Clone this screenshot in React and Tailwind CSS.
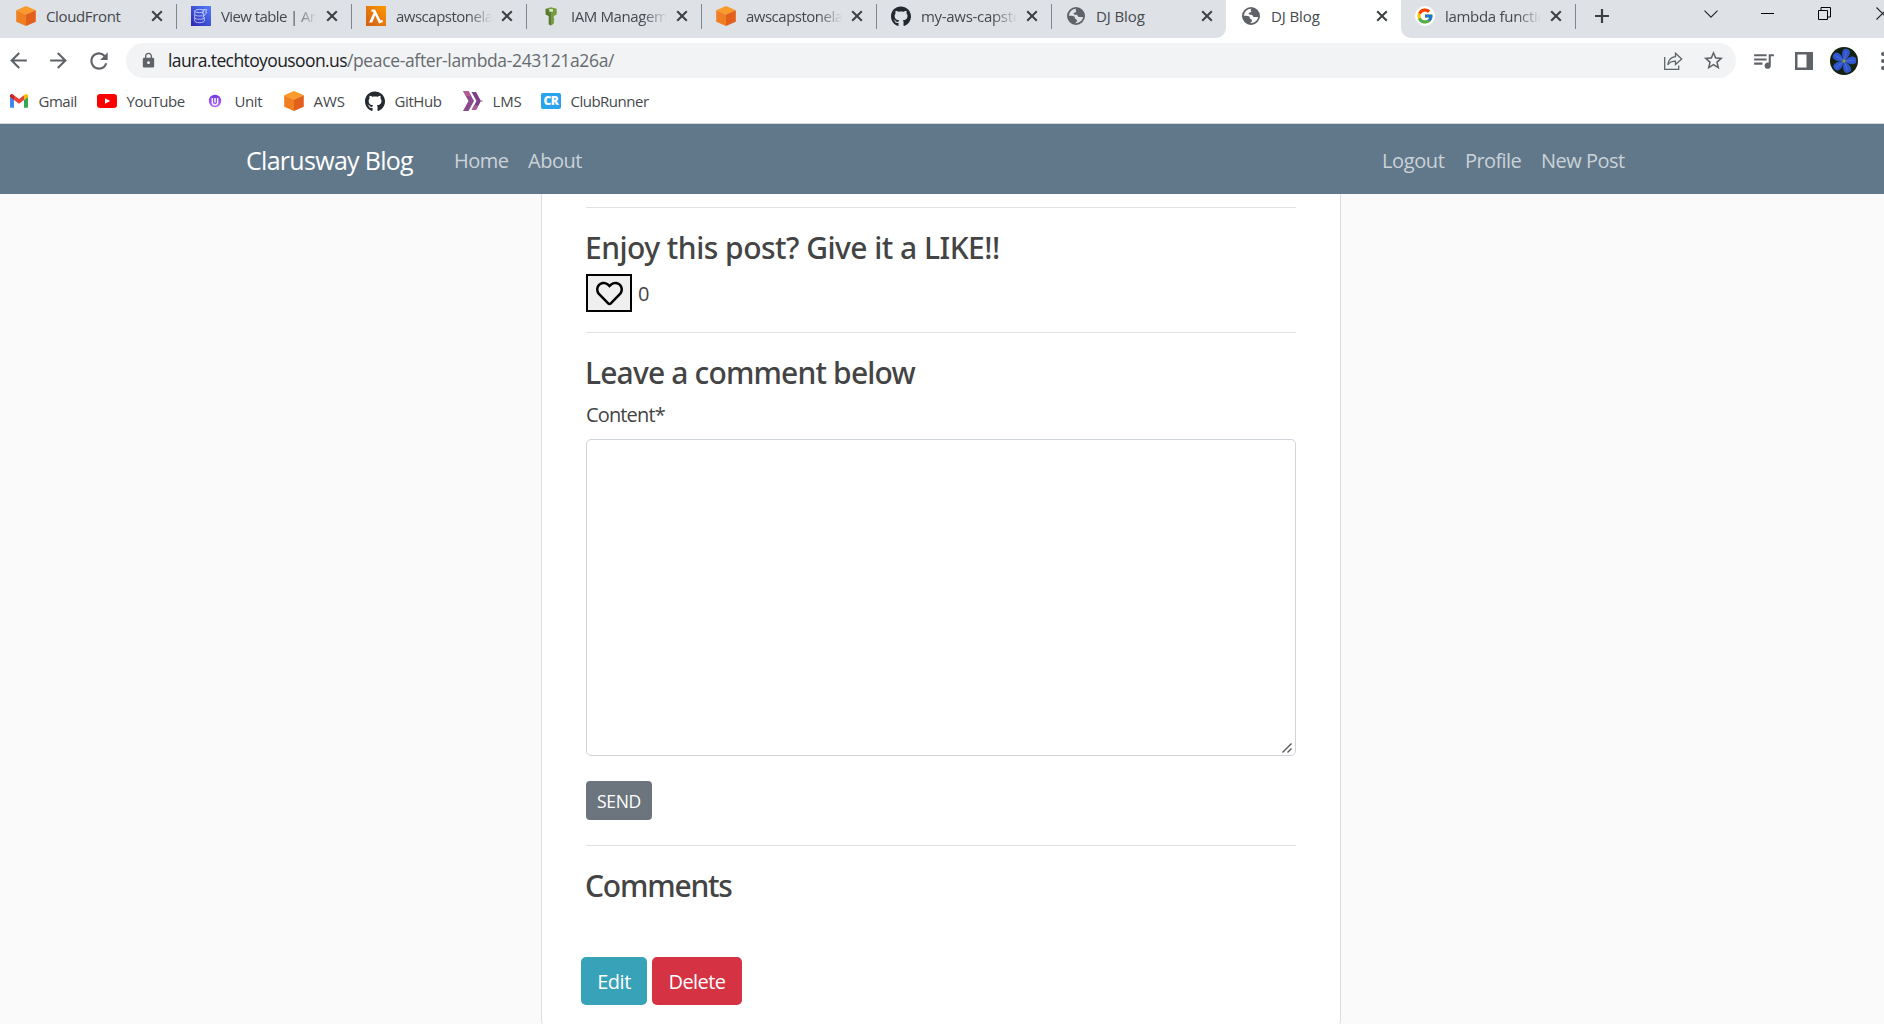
import React from "react";
import { FaGithub, FaRegHeart } from "react-icons/fa";
import { FcGoogle } from "react-icons/fc";
import { MdArrowBack, MdArrowForward, MdRefresh, MdLock, MdStarBorder, MdQueueMusic } from "react-icons/md";

const AwsCube = () => (
  <svg viewBox="0 0 20 20" className="h-5 w-5 shrink-0">
    <path d="M10 0 L19.8 4.2 L10 8.4 L0.2 4.2 Z" fill="#fa9a2a" />
    <path d="M0.2 4.2 L10 8.4 V20 L0.2 15.8 Z" fill="#f07f22" />
    <path d="M19.8 4.2 L10 8.4 V20 L19.8 15.8 Z" fill="#e2601c" />
  </svg>
);

const DynamoIcon = () => (
  <svg viewBox="0 0 20 20" className="h-5 w-5 shrink-0">
    <defs>
      <linearGradient id="dynamo" x1="0" y1="1" x2="1" y2="0">
        <stop offset="0" stopColor="#2e27ad" />
        <stop offset="1" stopColor="#527fff" />
      </linearGradient>
    </defs>
    <rect width="20" height="20" fill="url(#dynamo)" />
    <g fill="none" stroke="#cfd6ff" strokeWidth="0.8">
      <ellipse cx="8.5" cy="5" rx="4.8" ry="1.6" />
      <path d="M3.700 5v10c0 .9 2.100 1.700 4.800 1.700s4.800-.8 4.800-1.700v-4M3.700 8.400c0 .9 2.100 1.600 4.800 1.600 1 0 2-.1 2.800-.4M3.700 11.700c0 .9 2.100 1.600 4.800 1.600s4.800-.7 4.800-1.600" />
      <path d="M12.500 3.500h3.300l-1.300 2.700h1.500l-4 5 1-3.500h-1.500z" />
    </g>
  </svg>
);

const LambdaIcon = () => (
  <svg viewBox="0 0 20 20" className="h-5 w-5 shrink-0">
    <defs>
      <linearGradient id="lambda" x1="0" y1="1" x2="1" y2="0">
        <stop offset="0" stopColor="#d05c17" />
        <stop offset="1" stopColor="#f90" />
      </linearGradient>
    </defs>
    <rect width="20" height="20" fill="url(#lambda)" />
    <path d="M5.500 3.600h3.600l5.300 10.700 1.700-.6 1 2.400-4 1.300L9.200 9.200 6.300 16.600H3l4.600-9.900-.6-1H5.500z" fill="#fff" />
  </svg>
);

const IamIcon = () => (
  <svg viewBox="0 0 20 20" className="h-5 w-5 shrink-0">
    <path d="M10 1.200 15.700 2.800V8.500L12.800 10V12.500L13.400 13.500 12.600 15l.6 1.300L12.300 18 10 19.600 7.800 18.200V10L4.700 8.500V2.800Z" fill="#759c3e" />
    <path d="M4.700 2.800 10 4.500V19.600L7.800 18.200V10L4.700 8.500Z" fill="#5c7a31" />
    <path d="M8.300 3.100h3.600v2.600H8.300z" fill="#dfe8d0" />
  </svg>
);

const GlobeIcon = () => (
  <svg viewBox="0 0 20 20" className="h-5 w-5 shrink-0">
    <circle cx="10" cy="10" r="8.100" fill="none" stroke="#5f6368" strokeWidth="1.800" />
    <path d="M11 2C9.600 3 9.300 4.600 10.400 5.400 9.600 6.600 7.900 6.300 7.600 7.600 7.500 8.800 9 8.700 10.200 8.800 12 9 11.600 10.600 12.800 11 14.500 11.300 15.600 10.600 18 11.300 18.800 6 15.500 2 11 2ZM2 9.800C4 9.600 7.300 9.500 8.400 10.600 9.200 11.500 8.400 12.400 9.600 13 10.800 13.500 11.300 14 10.900 15.200 10.500 16.200 9 16.400 8.800 18 4.500 17.500 1.800 14 2 9.800Z" fill="#5f6368" />
  </svg>
);

const GithubMark = () => <FaGithub className="h-[21px] w-5 shrink-0 text-[#24292f]" />;

const GoogleMark = () => (
  <span className="flex h-5 w-5 shrink-0 items-center justify-center rounded-full bg-white">
    <FcGoogle className="h-[18px] w-[18px]" />
  </span>
);

const GmailIcon = () => (
  <svg viewBox="0 0 20 20" className="h-5 w-5 shrink-0">
    <path d="M1 6v9.700c0 .7.500 1.100 1.100 1.100H5V8.500z" fill="#4285f4" />
    <path d="M15 8.500v8.300h2.900c.6 0 1.100-.5 1.100-1.100V6z" fill="#34a853" />
    <path d="M15 4.200V9l4-3V4.800c0-1.500-1.700-2.300-2.900-1.400z" fill="#fbbc04" />
    <path d="M5 9V4.200l5 3.800 5-3.800V9l-5 3.800z" fill="#ea4335" />
    <path d="M1 4.800V6l4 3V4.200L3.900 3.400C2.700 2.500 1 3.300 1 4.800z" fill="#c5221f" />
  </svg>
);

const YoutubeIcon = () => (
  <svg viewBox="0 0 20 20" className="h-5 w-5 shrink-0">
    <rect x="0" y="3" width="20" height="14" rx="3.200" fill="#f00" />
    <path d="M8 7.200 13.200 10 8 12.800z" fill="#fff" />
  </svg>
);

const UnitIcon = () => (
  <svg viewBox="0 0 20 20" className="h-5 w-5 shrink-0">
    <defs>
      <linearGradient id="unit" x1="0" y1="0" x2="0" y2="1">
        <stop offset="0" stopColor="#6f35e8" />
        <stop offset="1" stopColor="#bd6bf5" />
      </linearGradient>
    </defs>
    <circle cx="10" cy="10" r="6.200" fill="url(#unit)" />
    <path d="M7.300 7v4.200a2.700 2.700 0 0 0 5.400 0V7M10 7v4.500" fill="none" stroke="#fff" strokeWidth="1.400" />
  </svg>
);

const LmsIcon = () => (
  <svg viewBox="0 0 20 20" className="h-5 w-5 shrink-0">
    <path d="M0 0h5.500l5.500 10-5.500 10H0l5.500-10z" fill="#8b4a8e" />
    <path d="M8.500 1H13l5 9-5 9H8.500l5-9z" fill="#7b3f86" />
    <path d="M0 0h5.500l2.700 5H2.800zM8.500 19H13l2.500-4.500H11z" fill="#c2669b" fillOpacity="0.700" />
    <circle cx="18.800" cy="10" r="1" fill="#c9a0cc" />
  </svg>
);

const ClubIcon = () => (
  <span className="flex h-4 w-5 shrink-0 items-center justify-center rounded-[2px] bg-[#2aa3ef] font-['Open_Sans'] text-[12px] leading-none font-extrabold tracking-[-0.5px] text-white">
    CR
  </span>
);

const CloseX = () => (
  <svg viewBox="0 0 12 12" className="h-3 w-3 shrink-0">
    <path d="M1.200 1.200 10.800 10.800M10.800 1.200 1.200 10.800" stroke="#3c4043" strokeWidth="2" />
  </svg>
);

function Tab({ icon: Icon, title, fade, sep, tracking = "tracking-[-0.6px]" }) {
  return (
    <div className="relative flex h-8 w-[175px] shrink-0 items-center pl-[15px]">
      <Icon />
      <span
        className={
          "ml-2.5 w-[96px] overflow-hidden pb-px text-[15px] leading-5 whitespace-nowrap text-[#45494d] " +
          tracking +
          (fade ? " [mask-image:linear-gradient(to_right,#000_75%,transparent_100%)]" : "")
        }
      >
        {title}
      </span>
      <span className="ml-[9px] flex">
        <CloseX />
      </span>
      {sep && <span className="absolute top-1 right-[-1px] h-[25px] w-px bg-[#80868b]" />}
    </div>
  );
}

const leftTabs = [
  { icon: AwsCube, title: "CloudFront", sep: true, tracking: "tracking-[-0.36px]" },
  { icon: DynamoIcon, title: "View table | Am", fade: true, sep: true },
  { icon: LambdaIcon, title: "awscapstonela", fade: true, sep: true, tracking: "tracking-[-0.5px]" },
  { icon: IamIcon, title: "IAM Managem", fade: true, sep: true, tracking: "tracking-[-0.4px]" },
  { icon: AwsCube, title: "awscapstonela", fade: true, sep: true, tracking: "tracking-[-0.5px]" },
  { icon: GithubMark, title: "my-aws-capsto", fade: true, sep: true, tracking: "tracking-[-0.3px]" },
  { icon: GlobeIcon, title: "DJ Blog", tracking: "tracking-[-0.1px]" },
];

function TabStrip() {
  return (
    <div className="flex h-[38px] shrink-0 bg-white">
      <div className="flex w-[1226px] shrink-0 rounded-br-[10px] bg-[#dee1e6] pl-px">
        {leftTabs.map((t, i) => (
          <Tab key={i} {...t} />
        ))}
      </div>
      <Tab icon={GlobeIcon} title="DJ Blog" tracking="tracking-[-0.1px]" />
      <div className="flex min-w-0 flex-1 overflow-hidden rounded-bl-[10px] bg-[#dee1e6]">
        <div className="-ml-px flex shrink-0">
          <Tab icon={GoogleMark} title="lambda functio" fade sep tracking="tracking-[-0.3px]" />
        </div>
        <svg viewBox="0 0 14 14" className="mt-[9px] ml-5 h-3.5 w-3.5 shrink-0">
          <path d="M7 0v14M0 7h14" stroke="#3c4043" strokeWidth="2.200" />
        </svg>
        <svg viewBox="0 0 14 8" className="mt-[10px] ml-[95px] h-2 w-3.5 shrink-0">
          <path d="M.5 .7 7 7.200 13.500 .7" fill="none" stroke="#222" strokeWidth="1.100" />
        </svg>
        <span className="mt-[13px] ml-[43px] h-px w-[13px] shrink-0 bg-black" />
        <svg viewBox="0 0 13 13" className="mt-[7px] ml-11 h-[13px] w-[13px] shrink-0">
          <path d="M.5 3.500h9v9h-9zM3 3.500V.5h9.500v9.500h-3" fill="none" stroke="#000" />
        </svg>
        <svg viewBox="0 0 13 13" className="mt-[7px] ml-[45px] h-[13px] w-[13px] shrink-0">
          <path d="M.5 .5l12 12M12.500 .5l-12 12" stroke="#222" strokeWidth="1.100" />
        </svg>
      </div>
    </div>
  );
}

const petals = [0, 72, 144, 216, 288];

function Avatar() {
  return (
    <svg viewBox="0 0 28 28" className="ml-[17px] h-7 w-7 shrink-0 rounded-full">
      <rect width="28" height="28" fill="#13220f" />
      {petals.map((a) => (
        <g key={a} transform={`rotate(${a + 14} 14 14)`}>
          <path d="M14 13.500C10.500 10 9.200 5.500 11 2.600 12.500 1.300 15.500 1.300 17 2.600 18.800 5.500 17.500 10 14 13.500Z" fill="#3156cc" />
          <path d="M14 12V4" stroke="#5b7be6" strokeWidth="0.600" />
        </g>
      ))}
      <circle cx="14" cy="14" r="1.700" fill="#8aa04a" />
    </svg>
  );
}

function Toolbar() {
  return (
    <div className="flex h-[45px] shrink-0 items-center overflow-hidden bg-white text-[#5f6368]">
      <MdArrowBack className="ml-[6px] h-[25px] w-[25px] shrink-0" />
      <MdArrowForward className="ml-[15px] h-[25px] w-[25px] shrink-0" />
      <MdRefresh className="ml-[15px] h-[26px] w-[26px] shrink-0" />
      <div className="ml-[14px] flex h-[35px] w-[1610px] shrink-0 items-center rounded-full bg-[#f1f3f4]">
        <MdLock className="ml-[14px] h-[17px] w-[17px]" />
        <span className="ml-[11px] pt-px text-[17.5px] leading-none tracking-[-0.6px] whitespace-nowrap text-[#202124]">
          laura.techtoyousoon.us
        </span>
        <span className="pt-px text-[17.5px] leading-none tracking-[-0.35px] whitespace-nowrap text-[#676b70]">
          /peace-after-lambda-243121a26a/
        </span>
        <svg viewBox="0 0 20 20" className="mr-[19px] ml-auto h-5 w-5" fill="none" stroke="currentColor" strokeWidth="1.300">
          <path d="M1.700 6V18.300H15.700V14.500" />
          <path d="M12.500 2.300 18.700 8l-6.200 5.500v-3.300C8.800 10.200 6.600 11.300 4.800 13.800 5.400 9.400 8 6.200 12.500 5.700z" />
        </svg>
        <MdStarBorder className="mr-[11px] h-[23px] w-[23px]" />
      </div>
      <MdQueueMusic className="ml-[15px] h-[25px] w-[25px] shrink-0" />
      <svg viewBox="0 0 18 18" className="ml-[19px] h-[18px] w-[18px] shrink-0">
        <path d="M0 0h18v18H0zM2.500 2.500v13h9v-13z" fill="currentColor" fillRule="evenodd" />
      </svg>
      <Avatar />
      <span className="ml-[23px] flex shrink-0 flex-col gap-[3px]">
        <i className="h-1 w-1 rounded-full bg-[#5f6368]" />
        <i className="h-1 w-1 rounded-full bg-[#5f6368]" />
        <i className="h-1 w-1 rounded-full bg-[#5f6368]" />
      </span>
    </div>
  );
}

const bookmarks = [
  { icon: GmailIcon, label: "Gmail", size: "w-[88px] tracking-[-0.5px]" },
  { icon: YoutubeIcon, label: "YouTube", size: "w-[108px] tracking-[-0.5px]" },
  { icon: UnitIcon, label: "Unit", size: "w-[79px] tracking-[-0.4px]" },
  { icon: AwsCube, label: "AWS", size: "w-[81px] tracking-[-0.1px]" },
  { icon: GithubMark, label: "GitHub", size: "w-[98px] tracking-[-0.4px]" },
  { icon: LmsIcon, label: "LMS", size: "w-[78px] tracking-[-0.1px]" },
  { icon: ClubIcon, label: "ClubRunner", size: "w-[120px] tracking-[-0.5px]" },
];

function Bookmarks() {
  return (
    <div className="flex h-[41px] shrink-0 items-center border-b border-[#d5d8dc] bg-white pb-1 pl-[9px]">
      {bookmarks.map(({ icon: Icon, label, size }) => (
        <div key={label} className={"flex shrink-0 items-center gap-[9.5px] text-[15px] leading-5 text-[#45494d] " + size}>
          <Icon />
          {label}
        </div>
      ))}
    </div>
  );
}

function Navbar() {
  return (
    <nav className="flex h-[70px] shrink-0 items-center bg-[#61788b] pt-[3px] pr-[259px] pl-[246px] text-xl whitespace-nowrap text-[#cbd2d8]">
      <span className="w-[208px] text-[25px] tracking-[-0.7px] text-white">Clarusway Blog</span>
      <span className="w-[74px] tracking-[-0.5px]">Home</span>
      <span className="tracking-[-0.5px]">About</span>
      <span className="ml-auto w-[83px] tracking-[-0.4px]">Logout</span>
      <span className="w-[76px] tracking-[-0.6px]">Profile</span>
      <span className="w-[84px] tracking-[-0.5px]">New Post</span>
    </nav>
  );
}

const heading = "-ml-px h-9 pt-0.5 font-['Noto_Sans'] text-[30px] leading-9 font-medium";

export default function App() {
  return (
    <div className="flex h-screen w-full flex-col overflow-hidden bg-[#fafafa] font-['Open_Sans','Noto_Sans',sans-serif]">
      <TabStrip />
      <Toolbar />
      <Bookmarks />
      <Navbar />
      <main className="ml-[541px] h-[832px] w-[800px] shrink-0 rounded-b-[5px] border-x border-b border-[#dddddd] bg-white px-11 pt-[13px] text-xl text-[#444]">
        <hr className="mb-5 border-[#e1e1e1]" />
        <h4 className={heading + " tracking-[-0.52px]"}>Enjoy this post? Give it a LIKE!!</h4>
        <div className="mt-2.5 flex h-[38px] items-center">
          <button className="flex h-[38px] w-[46px] items-center justify-center border-2 border-black bg-[#efefef] text-black">
            <FaRegHeart className="h-[27px] w-[27px]" />
          </button>
          <span className="ml-[6px] pt-0.5">0</span>
        </div>
        <hr className="my-5 border-[#e1e1e1]" />
        <h4 className={heading + " tracking-[-0.83px]"}>Leave a comment below</h4>
        <label className="mt-2.5 block h-[30px] pt-px leading-[30px] tracking-[-0.85px]">Content*</label>
        <div className="relative mt-2.5 h-[317px]">
          <textarea className="block h-full w-full resize-none rounded-[5px] border border-[#ced4da] bg-white outline-none" />
          <svg viewBox="0 0 10 10" className="absolute right-1 bottom-[3px] h-2.5 w-2.5">
            <path d="M.5 9.500 9.500 .5M5.500 9.500l4-4" stroke="#555" strokeWidth="1.400" />
          </svg>
        </div>
        <button className="mt-[25px] flex h-[39px] w-[66px] items-center justify-center rounded-[4px] bg-[#6c757d] pt-px text-[17.5px] tracking-[-0.3px] text-white">
          SEND
        </button>
        <hr className="mt-[25px] mb-5 border-[#e1e1e1]" />
        <h4 className={heading + " tracking-[-1.2px]"}>Comments</h4>
        <div className="mt-[55px] -ml-[5px] flex gap-[5px] text-white">
          <button className="h-12 w-[66px] rounded-[5px] bg-[#37a2b8] pt-px tracking-[-0.5px]">Edit</button>
          <button className="h-12 w-[90px] rounded-[5px] bg-[#d53343] pt-px tracking-[-0.55px]">Delete</button>
        </div>
      </main>
    </div>
  );
}
